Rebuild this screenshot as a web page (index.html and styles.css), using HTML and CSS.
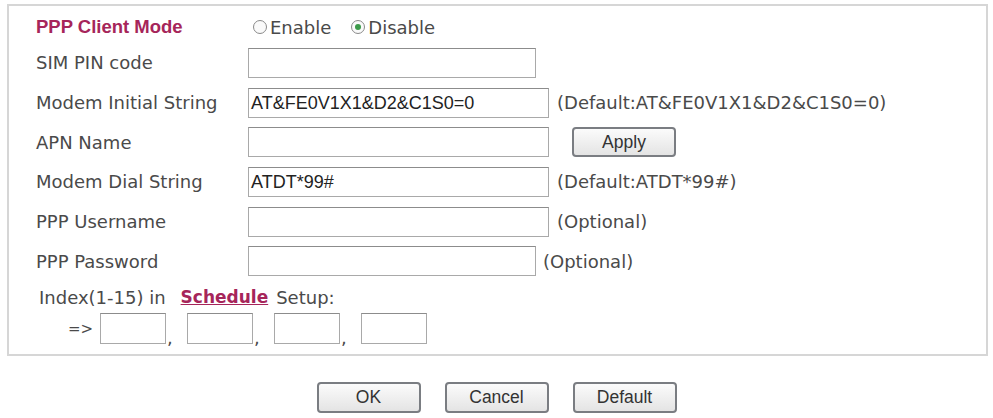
FILE: index.html
```html
<!DOCTYPE html>
<html lang="en">
<head>
    <meta charset="UTF-8">
    <title>PPP Client Mode</title>
    <link rel="stylesheet" href="styles.css">
</head>
<body>
    <div class="panel">
        <div class="row row-first">
            <div class="label label-title">PPP Client Mode</div>
            <div class="field">
                <label class="radio"><span class="dot"></span>Enable</label>
                <label class="radio"><span class="dot on"></span>Disable</label>
            </div>
        </div>
        <div class="row">
            <div class="label">SIM PIN code</div>
            <div class="field"><div class="input w-short"></div></div>
        </div>
        <div class="row">
            <div class="label">Modem Initial String</div>
            <div class="field">
                <div class="input w-long">AT&amp;FE0V1X1&amp;D2&amp;C1S0=0</div>
                <span class="note">(Default:AT&amp;FE0V1X1&amp;D2&amp;C1S0=0)</span>
            </div>
        </div>
        <div class="row">
            <div class="label">APN Name</div>
            <div class="field">
                <div class="input w-long"></div>
                <button class="btn btn-apply">Apply</button>
            </div>
        </div>
        <div class="row">
            <div class="label">Modem Dial String</div>
            <div class="field">
                <div class="input w-long">ATDT*99#</div>
                <span class="note">(Default:ATDT*99#)</span>
            </div>
        </div>
        <div class="row">
            <div class="label">PPP Username</div>
            <div class="field">
                <div class="input w-long"></div>
                <span class="note">(Optional)</span>
            </div>
        </div>
        <div class="row">
            <div class="label">PPP Password</div>
            <div class="field">
                <div class="input w-short"></div>
                <span class="note note-tight">(Optional)</span>
            </div>
        </div>
        <div class="index-line">Index(1-15) in <a href="#" class="link">Schedule</a> Setup:</div>
        <div class="index-row">
            <span class="arrow">=&gt;</span>
            <div class="input small"></div><span class="comma">,</span>
            <div class="input small"></div><span class="comma">,</span>
            <div class="input small"></div><span class="comma">,</span>
            <div class="input small"></div>
        </div>
    </div>

    <div class="actions">
        <button class="btn">OK</button>
        <button class="btn">Cancel</button>
        <button class="btn">Default</button>
    </div>
</body>
</html>
```

FILE: styles.css
```css
* {
    box-sizing: border-box;
}

body {
    margin: 0;
    background-color: #ffffff;
    font-family: "DejaVu Sans", Verdana, sans-serif;
    font-size: 18px;
    color: #4a4a4a;
}

.panel {
    width: 981px;
    margin: 4px 0 0 7px;
    border: 2px solid #d6d6d6;
    padding: 5px 0 10px 27px;
}

.row {
    display: flex;
    align-items: center;
    height: 39.7px;
}

.row-first {
    height: 32px;
}

.label {
    width: 212px;
    flex-shrink: 0;
}

.label-title {
    font-family: "Liberation Sans", Arial, sans-serif;
    font-weight: bold;
    font-size: 18.5px;
    color: #a6255a;
}

.field {
    display: flex;
    align-items: center;
}

.radio {
    display: flex;
    align-items: center;
    margin-left: 5px;
    margin-right: 15px;
}

.dot {
    width: 14px;
    height: 14px;
    border: 1px solid #8a8a8a;
    border-radius: 50%;
    margin-right: 3px;
    display: flex;
    align-items: center;
    justify-content: center;
    background: #fafafa;
}

.dot.on::after {
    content: "";
    width: 6px;
    height: 6px;
    border-radius: 50%;
    background: #3c9a4a;
}

.input {
    height: 30px;
    border: 1px solid #a9a9a9;
    border-top-color: #8c8c8c;
    background: #ffffff;
    font-family: "Liberation Sans", Arial, sans-serif;
    font-size: 18px;
    color: #222;
    padding: 0 2px;
    line-height: 28px;
    white-space: nowrap;
}

.w-short {
    width: 288px;
}

.w-long {
    width: 301px;
}

.note {
    margin-left: 8px;
}

.note-tight {
    margin-left: 7px;
}

.btn {
    font-family: "Liberation Sans", Arial, sans-serif;
    font-size: 17.5px;
    color: #333;
    width: 104px;
    height: 31px;
    border: 2px solid #7a7d82;
    border-radius: 4px;
    background: linear-gradient(#fbfbfb, #e4e4e4);
    padding: 0;
}

.btn-apply {
    margin-left: 23px;
    height: 30px;
}

.index-line {
    height: 32px;
    display: flex;
    align-items: center;
    padding-left: 3px;
}

.link {
    color: #a6255a;
    font-weight: bold;
    font-size: 17px;
    margin: 0 8px 0 15px;
}

.index-row {
    display: flex;
    align-items: center;
    height: 31px;
}

.arrow {
    margin-left: 32px;
    width: 32px;
    font-size: 15px;
}

.input.small {
    width: 66px;
    height: 31px;
}

.comma {
    width: 21px;
    padding-left: 1px;
    align-self: flex-end;
    line-height: 16px;
    margin-bottom: -2px;
}

.actions {
    display: flex;
    justify-content: center;
    gap: 24px;
    margin-top: 26px;
}
```
